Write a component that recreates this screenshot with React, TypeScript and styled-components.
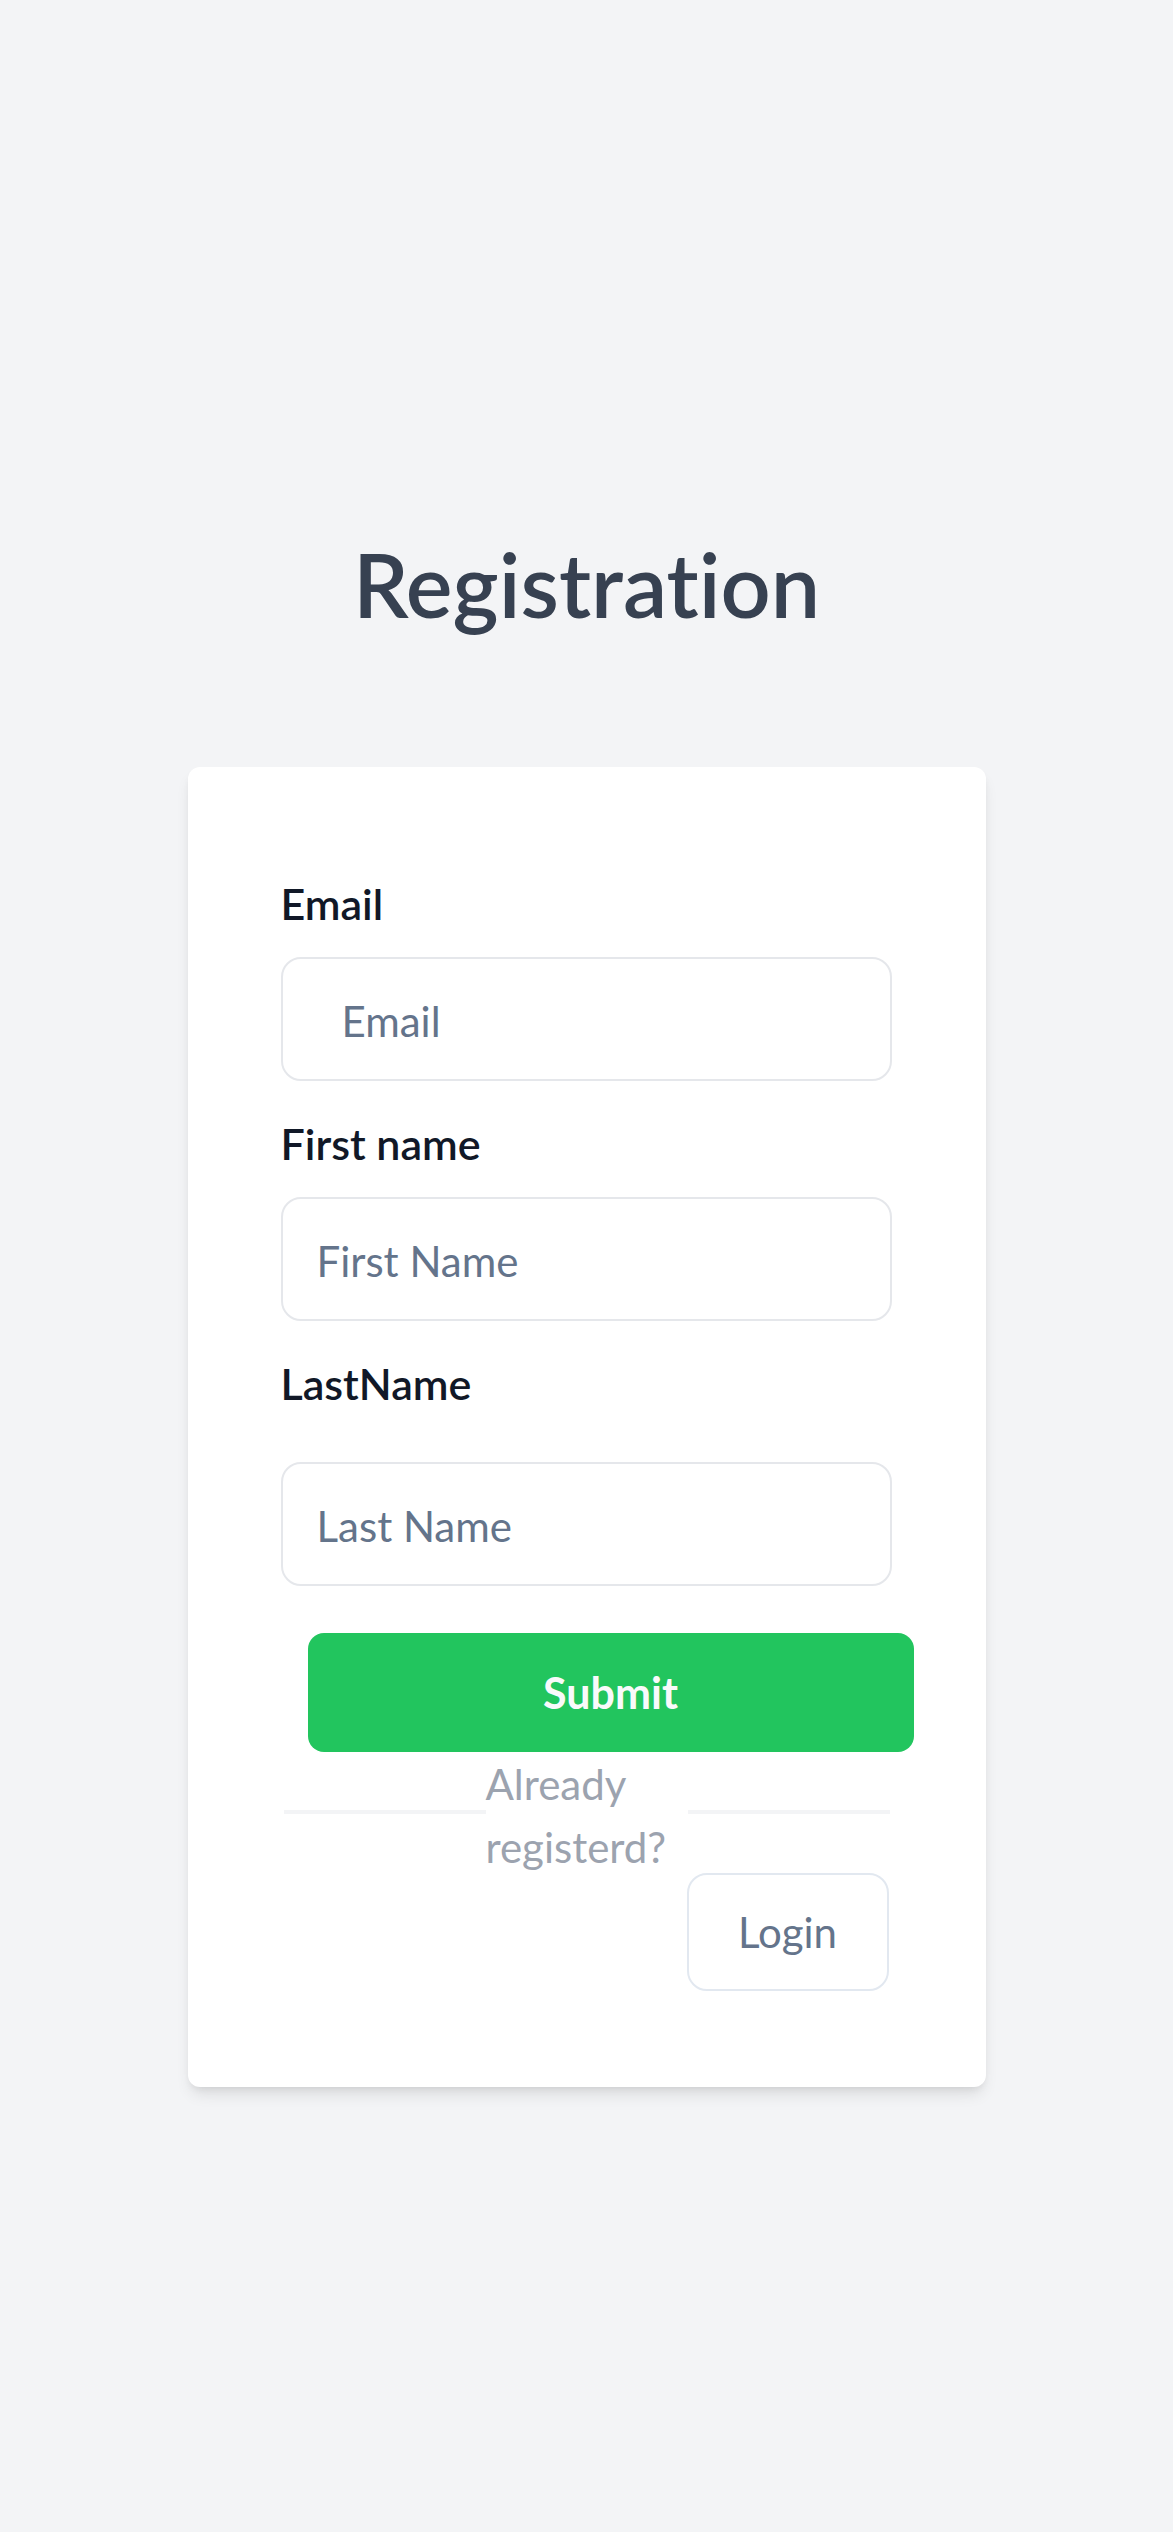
import React from "react";
import styled, { createGlobalStyle } from "styled-components";

const FONT = `"Segoe UI", Lato, "Open Sans", sans-serif`;

const GlobalStyle = createGlobalStyle`
  html, body {
    margin: 0;
    padding: 0;
    background: #f3f4f6;
    font-family: ${FONT};
    font-variant-ligatures: none;
  }
  * { box-sizing: border-box; font-variant-ligatures: none; }
`;

const Page = styled.main`
  min-height: 2532px;
  display: flex;
  flex-direction: column;
  align-items: center;
  padding-top: 532px;
  background: #f3f4f6;
`;

const Title = styled.h1`
  margin: 0;
  font-family: ${FONT};
  font-size: 88px;
  line-height: 1.2;
  font-weight: 600;
  color: #374151;
  font-variant-ligatures: none;
`;

const Card = styled.section`
  width: 798px;
  margin-top: 129px;
  padding: 105px 94px 96px 93px;
  background: #ffffff;
  border-radius: 12px;
  box-shadow: 0 10px 15px -3px rgba(0, 0, 0, 0.1), 0 4px 8px -4px rgba(0, 0, 0, 0.1);
`;

const Form = styled.form`
  display: flex;
  flex-direction: column;
`;

const Field = styled.div<{ $top: number }>`
  display: flex;
  flex-direction: column;
  margin-top: ${(p) => p.$top}px;
`;

const Label = styled.label<{ $gap: number }>`
  font-family: ${FONT};
  font-size: 43px;
  line-height: 63px;
  font-weight: 600;
  color: #111827;
  margin-bottom: ${(p) => p.$gap}px;
`;

const Input = styled.input<{ $indent: number }>`
  width: 100%;
  height: 124px;
  border: 2px solid #e5e7eb;
  border-radius: 20px;
  padding: 4px 20px 0 ${(p) => p.$indent}px;
  font-family: ${FONT};
  font-size: 42px;
  color: #111827;
  background: #ffffff;
  outline: none;
  &::placeholder {
    color: #64748b;
    opacity: 1;
  }
`;

const SubmitButton = styled.button`
  width: 606px;
  height: 119px;
  margin: 47px 0 0 27px;
  border: none;
  border-radius: 16px;
  background: #22c55e;
  color: #f9fafb;
  font-family: ${FONT};
  font-size: 43px;
  font-weight: 700;
  cursor: pointer;
`;

const DividerRow = styled.div`
  display: flex;
  align-items: center;
  margin: -3px 2px 0 3px;
`;

const Line = styled.span`
  flex: 1 1 0;
  height: 4px;
  margin-top: -4px;
  background: #f3f4f6;
`;

const DividerText = styled.span`
  flex: 1 1 0;
  min-width: 0;
  padding-top: 4px;
  font-family: ${FONT};
  font-size: 42px;
  line-height: 63px;
  color: #9ca3af;
`;

const LoginRow = styled.div`
  display: flex;
  justify-content: flex-end;
  margin: -6px 3px 0 0;
`;

const LoginButton = styled.button`
  width: 202px;
  height: 118px;
  border: 2px solid #e2e8f0;
  border-radius: 20px;
  background: #ffffff;
  color: #64748b;
  font-family: ${FONT};
  font-size: 42px;
  cursor: pointer;
`;

export default function App() {
  return (
    <>
      <GlobalStyle />
      <Page>
        <Title>Registration</Title>
        <Card>
          <Form onSubmit={(e) => e.preventDefault()}>
            <Field $top={0}>
              <Label $gap={22} htmlFor="email">Email</Label>
              <Input id="email" type="email" placeholder="Email" $indent={59} />
            </Field>
            <Field $top={31}>
              <Label $gap={22} htmlFor="first">First name</Label>
              <Input id="first" type="text" placeholder="First Name" $indent={34} />
            </Field>
            <Field $top={31}>
              <Label $gap={47} htmlFor="last">LastName</Label>
              <Input id="last" type="text" placeholder="Last Name" $indent={34} />
            </Field>
            <SubmitButton type="submit">Submit</SubmitButton>
            <DividerRow>
              <Line />
              <DividerText>Already registerd?</DividerText>
              <Line />
            </DividerRow>
            <LoginRow>
              <LoginButton type="button">Login</LoginButton>
            </LoginRow>
          </Form>
        </Card>
      </Page>
    </>
  );
}
